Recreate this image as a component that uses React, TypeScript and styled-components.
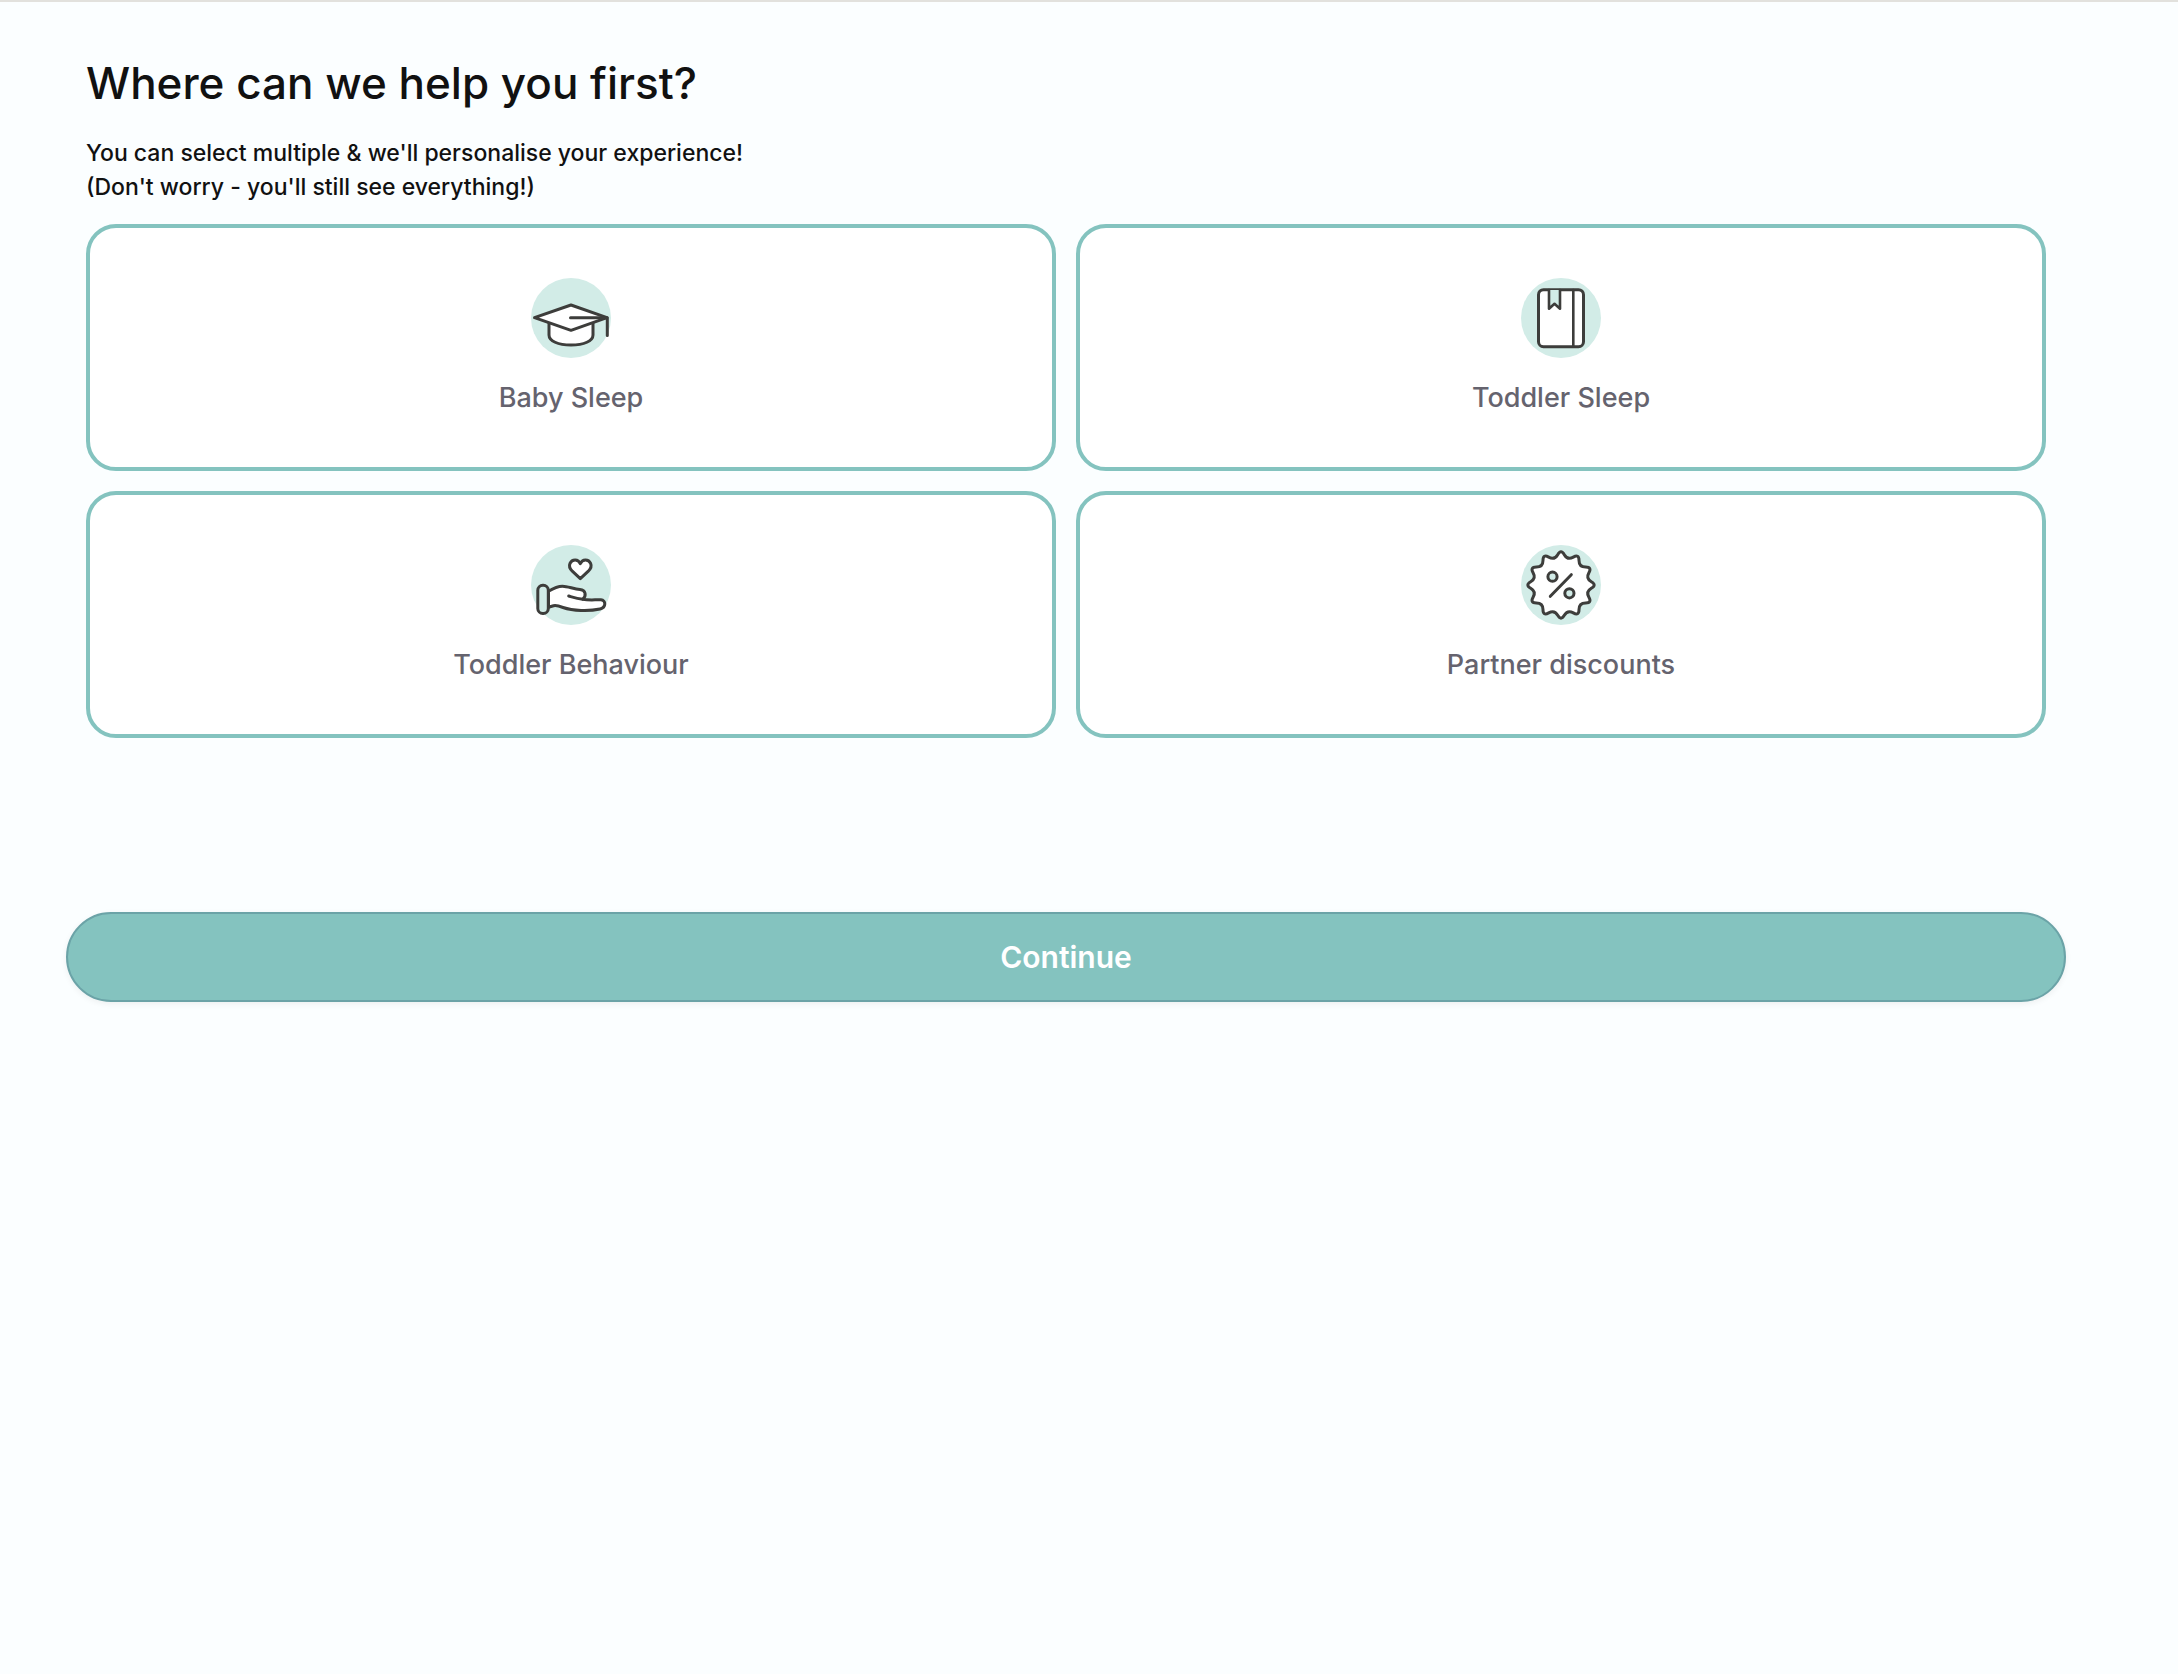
import React, { useState } from "react";
import styled, { createGlobalStyle } from "styled-components";

const mint = "#d2ece7";
const teal = "#84c3bf";
const ink = "#3d3d3b";

const GlobalStyle = createGlobalStyle`
  *, *::before, *::after { box-sizing: border-box; }
  body {
    margin: 0;
    background: #fbfeff;
    color: #111111;
    font-family: Inter, "Liberation Sans", sans-serif;
  }
`;

const Page = styled.main`
  border-top: 2px solid #e2e1dd;
  padding: 48px 112px 48px 66px;
`;

const Intro = styled.header`
  padding: 0 20px;
`;

const Title = styled.h1`
  margin: 0 0 20px;
  font-size: 44px;
  line-height: 66px;
  font-weight: 500;
`;

const Lead = styled.p`
  margin: 0;
  font-size: 23px;
  line-height: 34px;
  font-weight: 500;
`;

const Grid = styled.div`
  display: grid;
  grid-template-columns: repeat(2, minmax(0, 1fr));
  gap: 20px;
  padding: 20px;
`;

const Card = styled.button<{ $selected: boolean }>`
  display: flex;
  flex-direction: column;
  align-items: center;
  gap: 20px;
  padding: 50px 20px;
  border: 4px solid ${teal};
  border-radius: 30px;
  background: ${(p) => (p.$selected ? mint : "#ffffff")};
  color: #65636e;
  font-family: inherit;
  font-size: 27px;
  line-height: 39px;
  font-weight: 500;
  cursor: pointer;
`;

const Icon = styled.svg`
  display: block;
  width: 80px;
  height: 80px;
  overflow: visible;
  fill: #ffffff;
  stroke: ${ink};
  stroke-width: 3;
  stroke-linecap: round;
  stroke-linejoin: round;
`;

const Disc = styled.circle`
  fill: ${mint};
  stroke: none;
`;

const Continue = styled.button`
  display: block;
  width: 100%;
  margin-top: 154px;
  padding: 24px;
  border: 2px solid #6ba3a7;
  border-radius: 45px;
  background: ${teal};
  box-shadow: 0 2px 6px rgba(0, 0, 0, 0.06);
  color: #ffffff;
  font-family: inherit;
  font-size: 30px;
  line-height: 38px;
  font-weight: 600;
  cursor: pointer;
`;

const sealPath = (() => {
  const points = Array.from({ length: 24 }, (_, i) => {
    const angle = (i * Math.PI) / 12 - Math.PI / 2;
    const radius = i % 2 === 0 ? 36 : 25.5;
    return [40 + radius * Math.cos(angle), 40 + radius * Math.sin(angle)];
  });
  const mid = (i: number) => {
    const a = points[i % 24];
    const b = points[(i + 1) % 24];
    return `${(a[0] + b[0]) / 2} ${(a[1] + b[1]) / 2}`;
  };
  return (
    `M${mid(23)}` +
    points.map((p, i) => `Q${p[0]} ${p[1]} ${mid(i)}`).join("") +
    "Z"
  );
})();

const CapIcon = () => (
  <>
    <path d="M18 44V57C18 63 27 67 40 67S62 63 62 57V44" />
    <path d="M3.5 39.7L40 27L76 39.7L40 52.3Z" />
    <path d="M39.5 39.7H76.3V57.5" fill="none" />
  </>
);

const BookIcon = () => (
  <>
    <rect x="17.5" y="11.7" width="45" height="57" rx="5" />
    <path d="M52.3 12V68" strokeWidth="2.6" />
    <path d="M28 12V30.7L33.5 25.8L39 30.7V12" fill={mint} strokeWidth="2.6" />
  </>
);

const HandIcon = () => (
  <>
    <path d="M17.5 46.3C22 43.5 26 41.2 31.5 41.2C37 41.2 43 44.3 49 44.5C55 44.8 55.5 51 51.8 54.2C58 55.5 64 54.6 70 54.8C75 55 75.5 62.5 69 64C58 66.4 42 66 32 62.5C28 61 25 60 22.5 60.8L17.5 62.3Z" />
    <path d="M37.7 51C42 52.3 46 53.8 51.8 54.2" fill="none" />
    <rect x="6.8" y="40.3" width="10.5" height="28.2" rx="5" fill={mint} />
    <path d="M49.3 33.7L41.3 26.2C35.5 20.5 40 14.8 44.2 14.9C47 15 48.5 16.8 49.3 18.7C50.1 16.8 51.6 15 54.4 14.9C58.6 14.8 63.1 20.5 57.3 26.2Z" />
  </>
);

const DiscountIcon = () => (
  <>
    <path d={sealPath} />
    <path d="M50.3 29.7L29.3 51.3" />
    <circle cx="31.5" cy="31.7" r="4.6" fill={mint} />
    <circle cx="48.4" cy="48.3" r="4.6" fill={mint} />
  </>
);

const topics = [
  { name: "Baby Sleep", Drawing: CapIcon },
  { name: "Toddler Sleep", Drawing: BookIcon },
  { name: "Toddler Behaviour", Drawing: HandIcon },
  { name: "Partner discounts", Drawing: DiscountIcon },
];

export default function App() {
  const [selected, setSelected] = useState<string[]>([]);
  const toggle = (name: string) =>
    setSelected((s) =>
      s.includes(name) ? s.filter((n) => n !== name) : [...s, name]
    );

  return (
    <>
      <GlobalStyle />
      <Page>
        <Intro>
          <Title>Where can we help you first?</Title>
          <Lead>
            You can select multiple &amp; we'll personalise your experience!
            <br />
            (Don't worry - you'll still see everything!)
          </Lead>
        </Intro>
        <Grid>
          {topics.map(({ name, Drawing }) => (
            <Card
              key={name}
              type="button"
              aria-pressed={selected.includes(name)}
              $selected={selected.includes(name)}
              onClick={() => toggle(name)}
            >
              <Icon viewBox="0 0 80 80" aria-hidden="true">
                <Disc cx="40" cy="40" r="40" />
                <Drawing />
              </Icon>
              <span>{name}</span>
            </Card>
          ))}
        </Grid>
        <Continue type="button">Continue</Continue>
      </Page>
    </>
  );
}
